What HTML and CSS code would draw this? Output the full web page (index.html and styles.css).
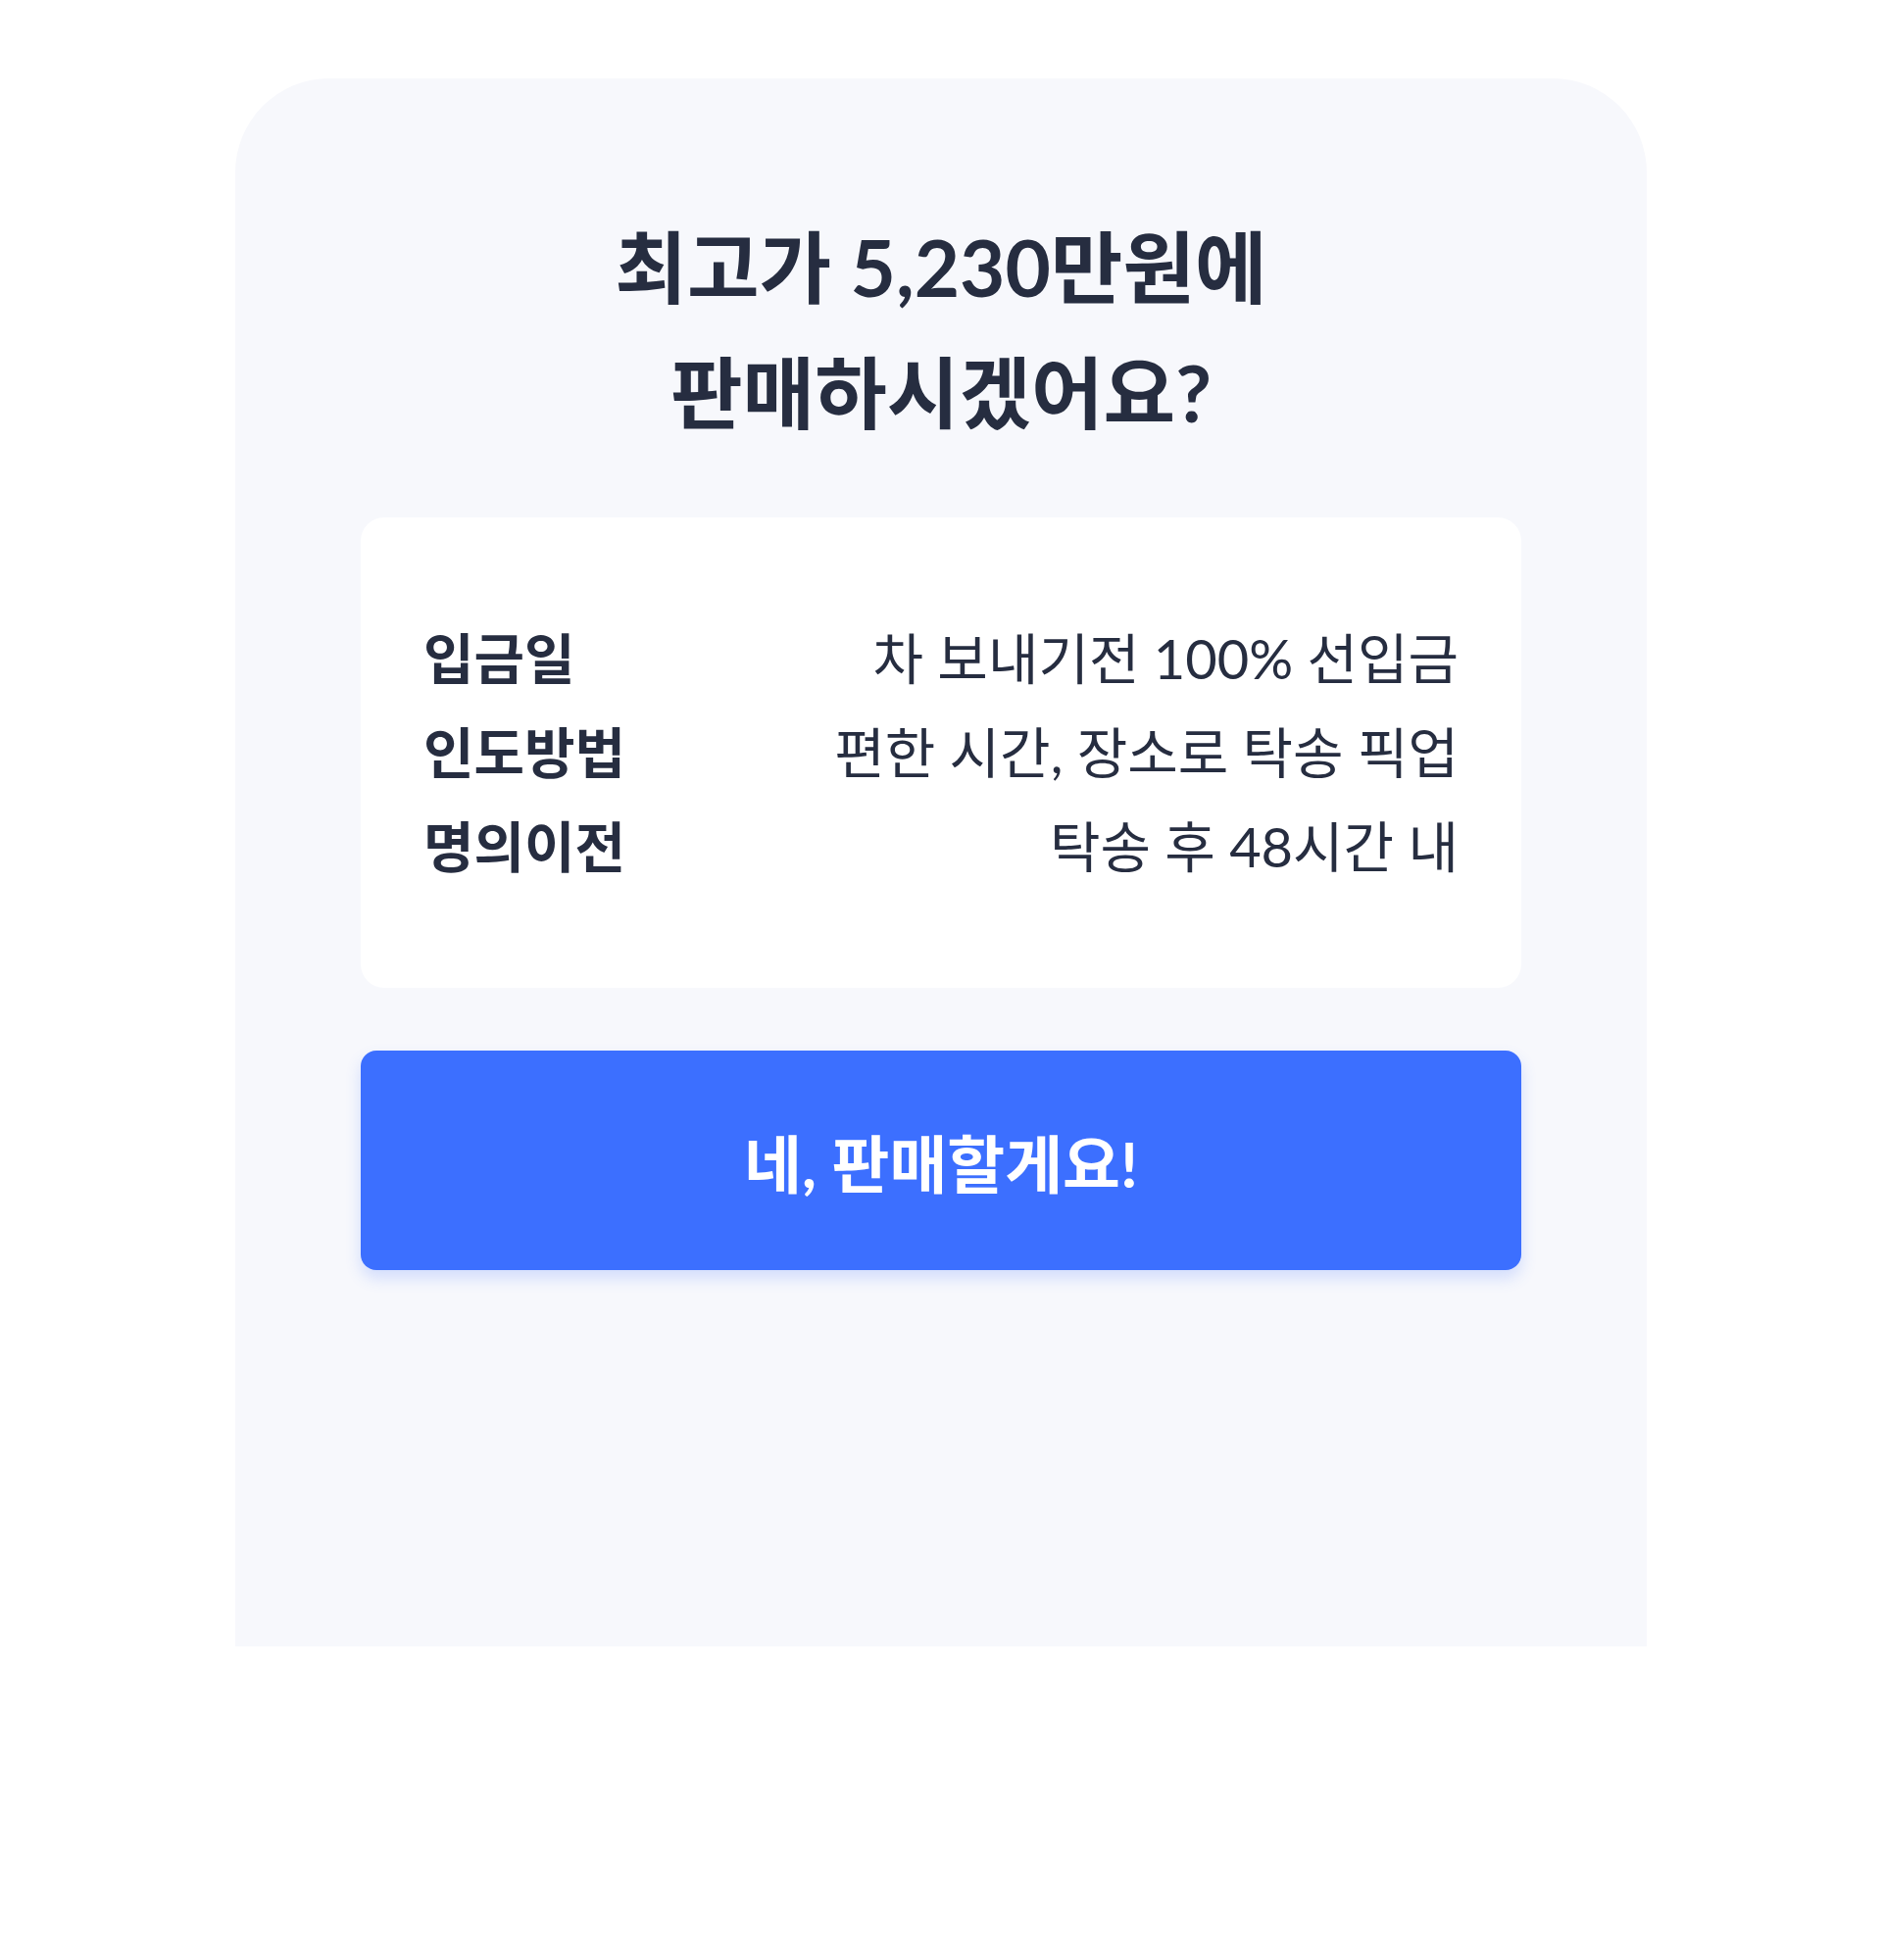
FILE: index.html
```html
<!DOCTYPE html>
<html lang="ko">
<head>
  <meta charset="UTF-8">
  <title>판매 확인</title>
  <meta name="viewport" content="width=device-width, initial-scale=1.0" />
  <link rel="stylesheet" href="styles.css">
</head>
<body>
  <div class="sheet">
    <h2 class="sheet-title">최고가 5,230만원에<br>판매하시겠어요?</h2>

    <div class="info-card">
      <div class="info-row">
        <span class="info-label">입금일</span>
        <span class="info-value">차 보내기전 100% 선입금</span>
      </div>
      <div class="info-row">
        <span class="info-label">인도방법</span>
        <span class="info-value">편한 시간, 장소로 탁송 픽업</span>
      </div>
      <div class="info-row">
        <span class="info-label">명의이전</span>
        <span class="info-value">탁송 후 48시간 내</span>
      </div>
    </div>

    <button type="button" class="btn">네, 판매할게요!</button>
  </div>
</body>
</html>
```

FILE: styles.css
```css
body {
  margin: 0;
  padding: 80px 240px;
  font-family: 'Lato', 'Noto Sans CJK KR', sans-serif;
  background: #ffffff;
  color: #262d40;
}

.sheet {
  background: #f7f8fc;
  border-radius: 96px 96px 0 0;
  height: 1600px;
  box-sizing: border-box;
  padding: 128px 128px 0;
}

.sheet-title {
  margin: 0 0 64px;
  text-align: center;
  font-size: 80px;
  line-height: 128px;
  font-weight: 700;
}

.info-card {
  background: white;
  border-radius: 24px;
  padding: 96px 64px;
}

.info-row {
  display: flex;
  justify-content: space-between;
  font-size: 56px;
  line-height: 96px;
}

.info-label {
  font-weight: 700;
}

.info-value {
  font-weight: 400;
  text-align: right;
}

.btn {
  display: block;
  width: 100%;
  height: 224px;
  margin-top: 64px;
  border: none;
  border-radius: 16px;
  background: #3c6fff;
  color: white;
  font-family: inherit;
  font-size: 64px;
  font-weight: 700;
  cursor: pointer;
  box-shadow: 0 8px 16px rgba(60, 111, 255, 0.2);
}
```
